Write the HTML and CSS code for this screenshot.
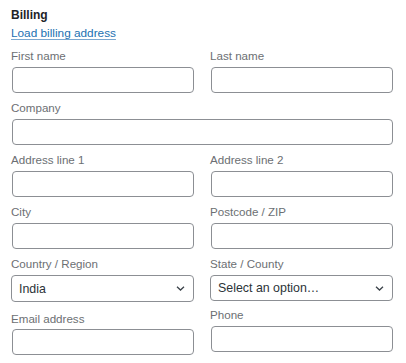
FILE: index.html
```html
<!DOCTYPE html>
<html lang="en">

<head>
    <meta charset="UTF-8" />
    <title>Billing</title>
    <link rel="stylesheet" href="styles.css">
</head>

<body>
    <div class="billing">
        <h3>Billing</h3>
        <a class="load-link" href="#">Load billing address</a>

        <div class="fields">
            <div class="field"><label>First name</label><input type="text"></div>
            <div class="field"><label>Last name</label><input type="text"></div>

            <div class="field wide"><label>Company</label><input type="text"></div>

            <div class="field"><label>Address line 1</label><input type="text"></div>
            <div class="field"><label>Address line 2</label><input type="text"></div>

            <div class="field"><label>City</label><input type="text"></div>
            <div class="field"><label>Postcode / ZIP</label><input type="text"></div>

            <div class="field">
                <label>Country / Region</label>
                <div class="select country">
                    <span>India</span>
                    <svg width="9" height="5" viewBox="0 0 9 5"><path d="M1 0.8 L4.5 4 L8 0.8" fill="none" stroke="#3c434a" stroke-width="1.3"/></svg>
                </div>
            </div>
            <div class="field">
                <label>State / County</label>
                <div class="select">
                    <span>Select an option…</span>
                    <svg width="9" height="5" viewBox="0 0 9 5"><path d="M1 0.8 L4.5 4 L8 0.8" fill="none" stroke="#3c434a" stroke-width="1.3"/></svg>
                </div>
            </div>

            <div class="field email"><label>Email address</label><input type="text"></div>
            <div class="field phone"><label>Phone</label><input type="text"></div>
        </div>
    </div>
</body>

</html>
```

FILE: styles.css
```css
body {
    margin: 0;
    background: #fff;
    font-family: 'Liberation Sans', Arial, sans-serif;
    color: #1d2327;
}

.billing {
    padding: 8px 13px 0 11px;
}

h3 {
    margin: 0;
    font-size: 12px;
    font-weight: bold;
    line-height: 15px;
}

.load-link {
    display: inline-block;
    font-size: 11.8px;
    line-height: 14px;
    color: #2271b1;
    text-decoration: underline;
    text-underline-offset: 2px;
    text-decoration-color: #7aa7cf;
}

.fields {
    display: grid;
    grid-template-columns: 1fr 1fr;
    column-gap: 16px;
    row-gap: 8px;
    margin-top: 8px;
    align-items: start;
}

.field.wide {
    grid-column: 1 / 3;
}

.field label {
    display: block;
    font-size: 11.6px;
    line-height: 14px;
    color: #6c6f73;
    margin-bottom: 4px;
}

.field input {
    display: block;
    box-sizing: border-box;
    width: calc(100% - 1px);
    height: 26px;
    margin: 0 0 0 1px;
    border: 1px solid #8c8f94;
    border-radius: 4px;
    background: #fff;
}

.select {
    display: flex;
    align-items: center;
    justify-content: space-between;
    box-sizing: border-box;
    height: 26px;
    padding: 0 8px 0 7px;
    border: 1px solid #8c8f94;
    border-radius: 4px;
    font-size: 12.4px;
    color: #2c3338;
}

.select.country {
    height: 27px;
}

.field.email {
    margin-top: 2px;
}

.field.email label {
    margin-bottom: 3px;
}

.field.phone {
    margin-top: -2px;
}
```
